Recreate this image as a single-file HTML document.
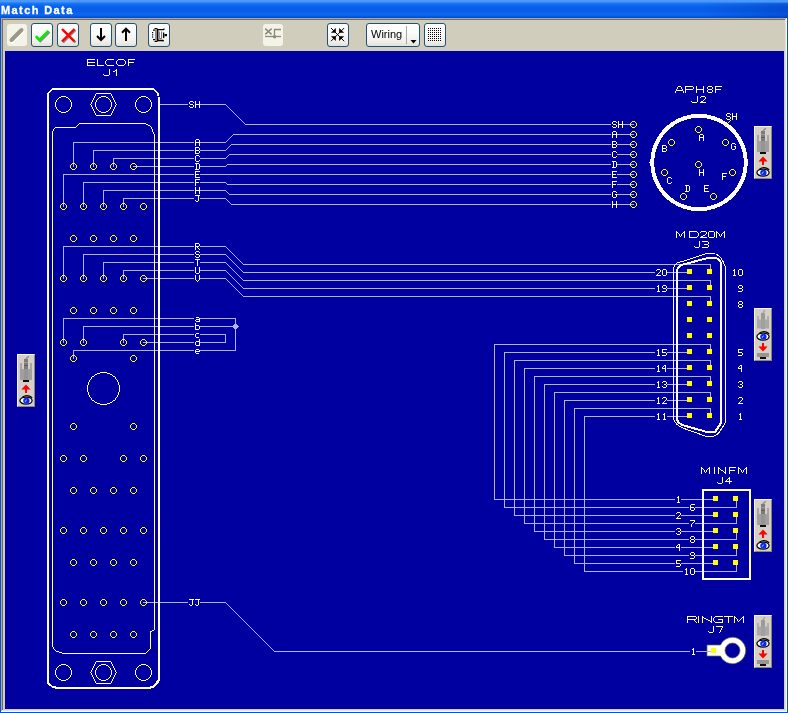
<!DOCTYPE html>
<html><head><meta charset="utf-8"><style>
html,body{margin:0;padding:0;}
body{width:788px;height:713px;position:relative;overflow:hidden;background:#0053e1;font-family:"Liberation Sans",sans-serif;}
.abs{position:absolute;}
#title{position:absolute;left:0;top:0;width:788px;height:18px;
 background:linear-gradient(to bottom,#3d8ef5 0px,#5aa4fd 1px,#3a8cf8 2px,#1470f0 4px,#0860ea 7px,#065de8 11px,#0a64ee 13px,#0c67f1 15px,#0052de 17px,#0049d2 18px);}
#ttext{will-change:transform;position:absolute;left:1px;top:4px;color:#fff;font-weight:bold;font-size:11px;letter-spacing:1.4px;-webkit-text-stroke:0.35px #fff;line-height:12px;}
#client{position:absolute;left:1px;top:18px;width:786px;height:694px;background:#d0cdbc;}
.bt1{position:absolute;left:0;top:0;width:786px;height:1px;background:#aca899;}
.bt2{position:absolute;left:1px;top:1px;width:785px;height:1px;background:#716f64;}
.bl1{position:absolute;left:0;top:0;width:1px;height:694px;background:#aca899;}
.bl2{position:absolute;left:1px;top:1px;width:1px;height:692px;background:#716f64;}
.br1{position:absolute;left:785px;top:0;width:1px;height:694px;background:#fbfaf4;}
.br2{position:absolute;left:784px;top:1px;width:1px;height:692px;background:#e6e3d4;}
.bb1{position:absolute;left:0;top:693px;width:786px;height:1px;background:#fbfaf4;}
.bb2{position:absolute;left:1px;top:692px;width:784px;height:1px;background:#e6e3d4;}
#canvas{position:absolute;left:5px;top:51px;width:779px;height:658px;background:#0000a0;}
.btn{position:absolute;border:1px solid #1c5180;border-radius:3px;
 background:linear-gradient(to bottom,#ffffff 0%,#fbfbf9 40%,#f0efea 80%,#e3e0d6 100%);}
.dbtn{position:absolute;border-radius:3px;background:#f4f3ea;}
.wid{position:absolute;width:16px;height:51px;background:#d4d0c8;border-top:1px solid #f6f5ee;border-left:1px solid #f6f5ee;border-right:1px solid #8a8775;border-bottom:1px solid #8a8775;}
#wiring{will-change:transform;position:absolute;left:371px;top:28px;font-size:11px;color:#000;line-height:13px;}
</style></head><body>
<div id="title"><div style="position:absolute;left:700px;top:3px;width:88px;height:15px;background:linear-gradient(to right,rgba(0,40,170,0),rgba(0,40,170,0.35))"></div><div id="ttext">Match Data</div></div>
<div id="client">
<div class="bt1"></div><div class="bt2"></div><div class="bl1"></div><div class="bl2"></div>
<div class="br1"></div><div class="br2"></div><div class="bb1"></div><div class="bb2"></div>
</div>
<div class="dbtn" style="left:7px;top:24px;width:20px;height:22px"><svg width="20" height="22"><path d="M4.5 16.5 L14.5 6.5" stroke="#fff" stroke-width="4" stroke-linecap="round" transform="translate(0.7,0.9)"/><path d="M4.5 16 L14.5 6" stroke="#9a9a84" stroke-width="4" stroke-linecap="round"/></svg></div>
<div class="btn" style="left:31px;top:23px;width:20px;height:22px"><svg width="20" height="22" style="position:absolute;left:0;top:0"><path d="M3.8 12.2 L7.4 15.8 L16.5 6.8" stroke="#8a8a8a" stroke-width="2.6" fill="none" transform="translate(0.9,1)"/><path d="M3.8 12.2 L7.4 15.8 L16.5 6.8" stroke="#00f000" stroke-width="2.6" fill="none"/></svg></div>
<div class="btn" style="left:57px;top:23px;width:20px;height:22px"><svg width="20" height="22" style="position:absolute;left:0;top:0"><g transform="translate(1,1)" stroke="#8a8a8a" stroke-width="2.4"><path d="M4 5 L16.5 17.5"/><path d="M16.5 5 L4 17.5"/></g><g stroke="#ff0000" stroke-width="2.4"><path d="M4 5 L16.5 17.5"/><path d="M16.5 5 L4 17.5"/></g></svg></div>
<div class="btn" style="left:90px;top:23px;width:20px;height:22px"><svg width="20" height="22" style="position:absolute;left:0;top:0"><path d="M10 4 V15.5" stroke="#000" stroke-width="2"/><path d="M6 12 L10 16 L14 12" stroke="#000" stroke-width="2" fill="none"/></svg></div>
<div class="btn" style="left:115px;top:23px;width:20px;height:22px"><svg width="20" height="22" style="position:absolute;left:0;top:0"><path d="M10 5 V17" stroke="#000" stroke-width="2"/><path d="M6 8.7 L10 4.7 L14 8.7" stroke="#000" stroke-width="2" fill="none"/></svg></div>
<div class="btn" style="left:148px;top:23px;width:20px;height:22px"><svg width="20" height="22" style="position:absolute;left:0;top:0"><g transform="translate(-149,-24)"><rect x="153" y="29.5" width="2" height="1.2" fill="#000"/><rect x="152" y="32" width="1.2" height="1.2" fill="#000"/><rect x="152" y="34.2" width="1.2" height="1.2" fill="#000"/><rect x="152" y="36.4" width="1.2" height="1.2" fill="#000"/><rect x="153" y="39" width="2" height="1.2" fill="#000"/><rect x="155" y="28" width="2" height="14" fill="#8c8c8c"/><rect x="154.5" y="28" width="3" height="1" fill="#000"/><rect x="154.5" y="41" width="3" height="1" fill="#000"/><path d="M157.7 29 V40.5 H163.3 M157.7 29.6 H163.5 L164.5 28.8" stroke="#000" stroke-width="1.4" fill="none"/><path d="M159.3 31.5 V38.6 H161.6 V31.5" stroke="#6a6a6a" stroke-width="1" fill="none"/><rect x="163" y="32.5" width="1.3" height="5.5" fill="#000"/><rect x="164.5" y="34" width="2.5" height="2.2" fill="#000"/><rect x="162.4" y="40" width="1.4" height="1.4" fill="#000"/></g></svg></div>
<div class="dbtn" style="left:263px;top:24px;width:20px;height:22px"><svg width="20" height="22" style="position:absolute;left:0;top:0"><g transform="translate(-263,-24)" stroke="#8c8c74" fill="none"><path d="M265.2 28.6 L271.6 34.4 M271.6 28.6 L265.2 34.4" stroke-width="1.5"/><path d="M265 36.5 H281" stroke-width="1.3"/><path d="M274.5 36.5 V29.5 H281" stroke-width="1.3"/></g><circle cx="11.5" cy="12.8" r="1.7" fill="#8c8c74"/></svg></div>
<div class="btn" style="left:327px;top:23px;width:20px;height:22px"><svg width="20" height="22" style="position:absolute;left:0;top:0"><g fill="#000"><path d="M2.9 8.8 L7.8 8.8 L7.8 4.1 Z"/><path d="M11.1 8.8 L16.2 8.8 L11.1 4.1 Z"/><path d="M2.9 12.3 L7.8 12.3 L7.8 17 Z"/><path d="M11.1 12.3 L16.2 12.3 L11.1 17 Z"/></g><path d="M3 4 L16.2 17.2 M16.2 4 L3 17.2" stroke="#000" stroke-width="1"/></svg></div>
<div class="btn" style="left:366px;top:23px;width:52px;height:22px"><div style="position:absolute;left:39px;top:2px;width:1px;height:18px;background:#aca899"></div><svg width="8" height="4" style="position:absolute;left:43px;top:16px"><path d="M0.5 0 H6.5 L3.5 3.5 Z" fill="#000"/></svg></div>
<div id="wiring">Wiring</div>
<div class="btn" style="left:424px;top:23px;width:20px;height:22px"><svg width="20" height="22" style="position:absolute;left:0;top:0"><rect x="3" y="4" width="1" height="1" fill="#000"/><rect x="3" y="6" width="1" height="1" fill="#000"/><rect x="3" y="8" width="1" height="1" fill="#000"/><rect x="3" y="10" width="1" height="1" fill="#000"/><rect x="3" y="12" width="1" height="1" fill="#000"/><rect x="3" y="14" width="1" height="1" fill="#000"/><rect x="3" y="16" width="1" height="1" fill="#000"/><rect x="5" y="4" width="1" height="1" fill="#000"/><rect x="5" y="6" width="1" height="1" fill="#000"/><rect x="5" y="8" width="1" height="1" fill="#000"/><rect x="5" y="10" width="1" height="1" fill="#000"/><rect x="5" y="12" width="1" height="1" fill="#000"/><rect x="5" y="14" width="1" height="1" fill="#000"/><rect x="5" y="16" width="1" height="1" fill="#000"/><rect x="7" y="4" width="1" height="1" fill="#000"/><rect x="7" y="6" width="1" height="1" fill="#000"/><rect x="7" y="8" width="1" height="1" fill="#000"/><rect x="7" y="10" width="1" height="1" fill="#000"/><rect x="7" y="12" width="1" height="1" fill="#000"/><rect x="7" y="14" width="1" height="1" fill="#000"/><rect x="7" y="16" width="1" height="1" fill="#000"/><rect x="9" y="4" width="1" height="1" fill="#000"/><rect x="9" y="6" width="1" height="1" fill="#000"/><rect x="9" y="8" width="1" height="1" fill="#000"/><rect x="9" y="10" width="1" height="1" fill="#000"/><rect x="9" y="12" width="1" height="1" fill="#000"/><rect x="9" y="14" width="1" height="1" fill="#000"/><rect x="9" y="16" width="1" height="1" fill="#000"/><rect x="11" y="4" width="1" height="1" fill="#000"/><rect x="11" y="6" width="1" height="1" fill="#000"/><rect x="11" y="8" width="1" height="1" fill="#000"/><rect x="11" y="10" width="1" height="1" fill="#000"/><rect x="11" y="12" width="1" height="1" fill="#000"/><rect x="11" y="14" width="1" height="1" fill="#000"/><rect x="11" y="16" width="1" height="1" fill="#000"/><rect x="13" y="4" width="1" height="1" fill="#000"/><rect x="13" y="6" width="1" height="1" fill="#000"/><rect x="13" y="8" width="1" height="1" fill="#000"/><rect x="13" y="10" width="1" height="1" fill="#000"/><rect x="13" y="12" width="1" height="1" fill="#000"/><rect x="13" y="14" width="1" height="1" fill="#000"/><rect x="13" y="16" width="1" height="1" fill="#000"/><rect x="15" y="4" width="1" height="1" fill="#000"/><rect x="15" y="6" width="1" height="1" fill="#000"/><rect x="15" y="8" width="1" height="1" fill="#000"/><rect x="15" y="10" width="1" height="1" fill="#000"/><rect x="15" y="12" width="1" height="1" fill="#000"/><rect x="15" y="14" width="1" height="1" fill="#000"/><rect x="15" y="16" width="1" height="1" fill="#000"/></svg></div>
<div id="canvas"></div>
<svg class="abs" style="left:0;top:0" width="788" height="713" viewBox="0 0 788 713" shape-rendering="crispEdges">
<path fill="#b0b0ff" d="M160 104h28v1h-28zM200 104h26v1h-26zM226 105h1v1h-1zM227 106h1v1h-1zM228 107h1v1h-1zM229 108h1v1h-1zM230 109h1v1h-1zM231 110h1v1h-1zM232 111h1v1h-1zM233 112h1v1h-1zM234 113h1v1h-1zM235 114h1v1h-1zM236 115h1v1h-1zM237 116h1v1h-1zM238 117h1v1h-1zM239 118h1v1h-1zM240 119h1v1h-1zM241 120h1v1h-1zM242 121h1v1h-1zM243 122h1v1h-1zM244 123h1v1h-1zM245 124h366v1h-366zM623 124h7v1h-7zM631 124h3v1h-3zM233 134h378v1h-378zM617 134h13v1h-13zM631 134h3v1h-3zM232 135h1v1h-1zM231 136h1v1h-1zM230 137h1v1h-1zM229 138h1v1h-1zM228 139h1v1h-1zM227 140h1v1h-1zM226 141h1v1h-1zM73 142h81v1h-81zM155 142h3v1h-3zM160 142h34v1h-34zM200 142h26v1h-26zM231 144h380v1h-380zM617 144h13v1h-13zM631 144h3v1h-3zM230 145h1v1h-1zM229 146h1v1h-1zM228 147h1v1h-1zM227 148h1v1h-1zM226 149h1v1h-1zM93 150h61v1h-61zM155 150h3v1h-3zM160 150h34v1h-34zM200 150h26v1h-26zM229 154h382v1h-382zM617 154h13v1h-13zM631 154h3v1h-3zM228 155h1v1h-1zM227 156h1v1h-1zM226 157h1v1h-1zM113 158h41v1h-41zM155 158h3v1h-3zM160 158h34v1h-34zM200 158h26v1h-26zM73 143h1v20h-1zM93 151h1v12h-1zM113 159h1v4h-1zM227 164h384v1h-384zM617 164h13v1h-13zM631 164h3v1h-3zM226 165h1v1h-1zM73 164h1v3h-1zM93 164h1v3h-1zM113 164h1v3h-1zM133 166h3v1h-3zM137 166h17v1h-17zM155 166h3v1h-3zM160 166h34v1h-34zM200 166h26v1h-26zM63 174h91v1h-91zM155 174h3v1h-3zM160 174h34v1h-34zM200 174h411v1h-411zM617 174h13v1h-13zM631 174h3v1h-3zM83 182h71v1h-71zM155 182h3v1h-3zM160 182h34v1h-34zM200 182h26v1h-26zM226 183h1v1h-1zM227 184h384v1h-384zM617 184h13v1h-13zM631 184h3v1h-3zM103 190h51v1h-51zM155 190h3v1h-3zM160 190h34v1h-34zM200 190h26v1h-26zM226 191h1v1h-1zM227 192h1v1h-1zM228 193h1v1h-1zM229 194h382v1h-382zM617 194h13v1h-13zM631 194h3v1h-3zM123 198h31v1h-31zM155 198h3v1h-3zM160 198h34v1h-34zM200 198h26v1h-26zM226 199h1v1h-1zM227 200h1v1h-1zM228 201h1v1h-1zM63 175h1v28h-1zM83 183h1v20h-1zM103 191h1v12h-1zM123 199h1v4h-1zM229 202h1v1h-1zM230 203h1v1h-1zM231 204h380v1h-380zM617 204h13v1h-13zM631 204h3v1h-3zM63 204h1v3h-1zM83 204h1v3h-1zM103 204h1v3h-1zM123 204h1v3h-1zM63 246h91v1h-91zM155 246h3v1h-3zM160 246h34v1h-34zM200 246h26v1h-26zM226 247h1v1h-1zM227 248h1v1h-1zM228 249h1v1h-1zM229 250h1v1h-1zM230 251h1v1h-1zM231 252h1v1h-1zM232 253h1v1h-1zM83 254h71v1h-71zM155 254h3v1h-3zM160 254h34v1h-34zM200 254h26v1h-26zM233 254h1v1h-1zM226 255h1v1h-1zM234 255h1v1h-1zM227 256h1v1h-1zM235 256h1v1h-1zM228 257h1v1h-1zM236 257h1v1h-1zM229 258h1v1h-1zM237 258h1v1h-1zM230 259h1v1h-1zM238 259h1v1h-1zM231 260h1v1h-1zM239 260h1v1h-1zM232 261h1v1h-1zM240 261h1v1h-1zM103 262h51v1h-51zM155 262h3v1h-3zM160 262h34v1h-34zM200 262h26v1h-26zM233 262h1v1h-1zM241 262h1v1h-1zM226 263h1v1h-1zM234 263h1v1h-1zM242 263h1v1h-1zM227 264h1v1h-1zM235 264h1v1h-1zM243 264h468v1h-468zM228 265h1v1h-1zM236 265h1v1h-1zM229 266h1v1h-1zM237 266h1v1h-1zM230 267h1v1h-1zM238 267h1v1h-1zM231 268h1v1h-1zM239 268h1v1h-1zM710 265h1v4h-1zM232 269h1v1h-1zM240 269h1v1h-1zM123 270h31v1h-31zM155 270h3v1h-3zM160 270h34v1h-34zM200 270h26v1h-26zM233 270h1v1h-1zM241 270h1v1h-1zM226 271h1v1h-1zM234 271h1v1h-1zM242 271h1v1h-1zM227 272h1v1h-1zM235 272h1v1h-1zM243 272h412v1h-412zM667 272h20v1h-20zM228 273h1v1h-1zM236 273h1v1h-1zM63 247h1v28h-1zM83 255h1v20h-1zM103 263h1v12h-1zM123 271h1v4h-1zM229 274h1v1h-1zM237 274h1v1h-1zM230 275h1v1h-1zM238 275h1v1h-1zM231 276h1v1h-1zM239 276h1v1h-1zM232 277h1v1h-1zM240 277h1v1h-1zM63 276h1v3h-1zM83 276h1v3h-1zM103 276h1v3h-1zM123 276h1v3h-1zM143 278h3v1h-3zM147 278h7v1h-7zM155 278h3v1h-3zM160 278h34v1h-34zM200 278h26v1h-26zM233 278h1v1h-1zM241 278h1v1h-1zM226 279h1v1h-1zM234 279h1v1h-1zM242 279h1v1h-1zM227 280h1v1h-1zM235 280h1v1h-1zM243 280h468v1h-468zM228 281h1v1h-1zM236 281h1v1h-1zM229 282h1v1h-1zM237 282h1v1h-1zM230 283h1v1h-1zM238 283h1v1h-1zM231 284h1v1h-1zM239 284h1v1h-1zM710 281h1v4h-1zM232 285h1v1h-1zM240 285h1v1h-1zM233 286h1v1h-1zM241 286h1v1h-1zM234 287h1v1h-1zM242 287h1v1h-1zM235 288h1v1h-1zM243 288h412v1h-412zM667 288h20v1h-20zM236 289h1v1h-1zM237 290h1v1h-1zM238 291h1v1h-1zM239 292h1v1h-1zM240 293h1v1h-1zM241 294h1v1h-1zM242 295h1v1h-1zM243 296h468v1h-468zM710 297h1v4h-1zM63 318h91v1h-91zM155 318h3v1h-3zM160 318h34v1h-34zM200 318h36v1h-36zM235 319h1v5h-1zM234 324h3v1h-3zM233 325h5v1h-5zM83 326h71v1h-71zM155 326h3v1h-3zM160 326h34v1h-34zM200 326h39v1h-39zM233 327h5v1h-5zM234 328h3v1h-3zM123 334h31v1h-31zM155 334h3v1h-3zM160 334h34v1h-34zM200 334h26v1h-26zM63 319h1v20h-1zM83 327h1v12h-1zM123 335h1v4h-1zM225 335h1v7h-1zM63 340h1v3h-1zM83 340h1v3h-1zM123 340h1v3h-1zM143 342h3v1h-3zM147 342h7v1h-7zM155 342h3v1h-3zM160 342h34v1h-34zM200 342h26v1h-26zM494 344h217v1h-217zM710 345h1v4h-1zM235 329h1v21h-1zM73 350h81v1h-81zM155 350h3v1h-3zM160 350h34v1h-34zM200 350h36v1h-36zM504 352h151v1h-151zM667 352h20v1h-20zM73 351h1v4h-1zM73 356h1v3h-1zM514 360h197v1h-197zM710 361h1v4h-1zM524 368h131v1h-131zM667 368h20v1h-20zM534 376h177v1h-177zM710 377h1v4h-1zM544 384h111v1h-111zM667 384h20v1h-20zM554 392h157v1h-157zM710 393h1v4h-1zM564 400h91v1h-91zM667 400h20v1h-20zM574 408h137v1h-137zM710 409h1v4h-1zM584 416h71v1h-71zM667 416h20v1h-20zM494 345h1v154h-1zM504 353h1v146h-1zM514 361h1v138h-1zM524 369h1v130h-1zM534 377h1v122h-1zM544 385h1v114h-1zM554 393h1v106h-1zM564 401h1v98h-1zM574 409h1v90h-1zM584 417h1v82h-1zM494 499h181v1h-181zM681 499h21v1h-21zM704 499h9v1h-9zM504 500h1v7h-1zM514 500h1v7h-1zM524 500h1v7h-1zM534 500h1v7h-1zM544 500h1v7h-1zM554 500h1v7h-1zM564 500h1v7h-1zM574 500h1v7h-1zM584 500h1v7h-1zM736 501h1v6h-1zM504 507h185v1h-185zM695 507h7v1h-7zM704 507h33v1h-33zM514 508h1v7h-1zM524 508h1v7h-1zM534 508h1v7h-1zM544 508h1v7h-1zM554 508h1v7h-1zM564 508h1v7h-1zM574 508h1v7h-1zM584 508h1v7h-1zM514 515h161v1h-161zM681 515h21v1h-21zM704 515h9v1h-9zM524 516h1v7h-1zM534 516h1v7h-1zM544 516h1v7h-1zM554 516h1v7h-1zM564 516h1v7h-1zM574 516h1v7h-1zM584 516h1v7h-1zM736 517h1v6h-1zM524 523h165v1h-165zM695 523h7v1h-7zM704 523h33v1h-33zM534 524h1v7h-1zM544 524h1v7h-1zM554 524h1v7h-1zM564 524h1v7h-1zM574 524h1v7h-1zM584 524h1v7h-1zM534 531h141v1h-141zM681 531h21v1h-21zM704 531h9v1h-9zM544 532h1v7h-1zM554 532h1v7h-1zM564 532h1v7h-1zM574 532h1v7h-1zM584 532h1v7h-1zM736 533h1v6h-1zM544 539h145v1h-145zM695 539h7v1h-7zM704 539h33v1h-33zM554 540h1v7h-1zM564 540h1v7h-1zM574 540h1v7h-1zM584 540h1v7h-1zM554 547h121v1h-121zM681 547h21v1h-21zM704 547h9v1h-9zM564 548h1v7h-1zM574 548h1v7h-1zM584 548h1v7h-1zM736 549h1v6h-1zM564 555h125v1h-125zM695 555h7v1h-7zM704 555h33v1h-33zM574 556h1v7h-1zM584 556h1v7h-1zM574 563h101v1h-101zM681 563h21v1h-21zM704 563h9v1h-9zM584 564h1v7h-1zM736 565h1v6h-1zM584 571h99v1h-99zM695 571h7v1h-7zM704 571h33v1h-33zM143 602h3v1h-3zM147 602h7v1h-7zM155 602h3v1h-3zM160 602h28v1h-28zM200 602h26v1h-26zM226 603h1v1h-1zM227 604h1v1h-1zM228 605h1v1h-1zM229 606h1v1h-1zM230 607h1v1h-1zM231 608h1v1h-1zM232 609h1v1h-1zM233 610h1v1h-1zM234 611h1v1h-1zM235 612h1v1h-1zM236 613h1v1h-1zM237 614h1v1h-1zM238 615h1v1h-1zM239 616h1v1h-1zM240 617h1v1h-1zM241 618h1v1h-1zM242 619h1v1h-1zM243 620h1v1h-1zM244 621h1v1h-1zM245 622h1v1h-1zM246 623h1v1h-1zM247 624h1v1h-1zM248 625h1v1h-1zM249 626h1v1h-1zM250 627h1v1h-1zM251 628h1v1h-1zM252 629h1v1h-1zM253 630h1v1h-1zM254 631h1v1h-1zM255 632h1v1h-1zM256 633h1v1h-1zM257 634h1v1h-1zM258 635h1v1h-1zM259 636h1v1h-1zM260 637h1v1h-1zM261 638h1v1h-1zM262 639h1v1h-1zM263 640h1v1h-1zM264 641h1v1h-1zM265 642h1v1h-1zM266 643h1v1h-1zM267 644h1v1h-1zM268 645h1v1h-1zM269 646h1v1h-1zM270 647h1v1h-1zM271 648h1v1h-1zM272 649h1v1h-1zM273 650h1v1h-1zM274 651h416v1h-416zM696 651h15v1h-15z"/><path fill="#ffffff" d="M87 59h8v1h-8zM107 59h7v1h-7zM118 59h6v1h-6zM128 59h7v1h-7zM106 60h1v1h-1zM117 60h1v1h-1zM124 60h1v1h-1zM87 60h1v2h-1zM128 60h1v2h-1zM87 62h8v1h-8zM128 62h6v1h-6zM105 61h1v3h-1zM116 61h1v3h-1zM125 61h1v3h-1zM87 63h1v2h-1zM97 59h1v6h-1zM106 64h1v1h-1zM117 64h1v1h-1zM124 64h1v1h-1zM87 65h8v1h-8zM97 65h7v1h-7zM107 65h7v1h-7zM118 65h6v1h-6zM128 63h1v3h-1zM116 69h1v1h-1zM115 70h2v1h-2zM113 71h2v1h-2zM103 74h1v1h-1zM109 69h1v6h-1zM104 75h5v1h-5zM116 71h1v5h-1zM678 86h3v1h-3zM685 86h8v1h-8zM708 86h4v1h-4zM715 86h7v1h-7zM52 88h102v1h-102zM677 87h1v2h-1zM681 87h1v2h-1zM685 87h1v2h-1zM693 87h1v2h-1zM696 86h1v3h-1zM703 86h1v3h-1zM707 87h1v2h-1zM712 87h1v2h-1zM715 87h1v2h-1zM51 89h104v1h-104zM676 89h1v1h-1zM682 89h1v1h-1zM685 89h8v1h-8zM696 89h8v1h-8zM708 89h4v1h-4zM715 89h6v1h-6zM50 90h2v1h-2zM154 90h2v1h-2zM676 90h7v1h-7zM49 91h2v1h-2zM155 91h2v1h-2zM707 90h1v2h-1zM712 90h1v2h-1zM48 92h2v1h-2zM156 92h2v1h-2zM675 91h1v2h-1zM683 91h1v2h-1zM685 90h1v3h-1zM696 90h1v3h-1zM703 90h1v3h-1zM708 92h4v1h-4zM715 90h1v3h-1zM96 93h15v1h-15zM95 94h1v2h-1zM111 94h1v2h-1zM157 93h2v3h-2zM61 96h5v1h-5zM101 96h5v1h-5zM141 96h5v1h-5zM701 96h4v1h-4zM59 97h2v1h-2zM66 97h2v1h-2zM94 96h1v2h-1zM99 97h2v1h-2zM106 97h2v1h-2zM112 96h1v2h-1zM139 97h2v1h-2zM146 97h2v1h-2zM700 97h1v1h-1zM58 98h1v1h-1zM68 98h1v1h-1zM98 98h1v1h-1zM108 98h1v1h-1zM138 98h1v1h-1zM148 98h1v1h-1zM705 97h1v2h-1zM57 99h1v1h-1zM69 99h1v1h-1zM93 98h1v2h-1zM97 99h1v1h-1zM109 99h1v1h-1zM113 98h1v2h-1zM137 99h1v1h-1zM149 99h1v1h-1zM704 99h1v1h-1zM703 100h1v1h-1zM56 100h1v2h-1zM70 100h1v2h-1zM92 100h1v2h-1zM96 100h1v2h-1zM110 100h1v2h-1zM114 100h1v2h-1zM136 100h1v2h-1zM150 100h1v2h-1zM190 101h3v1h-3zM691 101h1v1h-1zM697 96h1v6h-1zM701 101h2v1h-2zM193 102h1v1h-1zM692 102h5v1h-5zM700 102h6v1h-6zM91 102h1v2h-1zM115 102h1v2h-1zM189 102h1v2h-1zM195 101h1v3h-1zM199 101h1v3h-1zM90 104h1v1h-1zM116 104h1v1h-1zM190 104h3v1h-3zM195 104h5v1h-5zM55 102h1v5h-1zM71 102h1v5h-1zM91 105h1v2h-1zM95 102h1v5h-1zM111 102h1v5h-1zM115 105h1v2h-1zM135 102h1v5h-1zM151 102h1v5h-1zM189 106h1v1h-1zM193 105h1v2h-1zM190 107h3v1h-3zM195 105h1v3h-1zM199 105h1v3h-1zM56 107h1v2h-1zM70 107h1v2h-1zM92 107h1v2h-1zM96 107h1v2h-1zM110 107h1v2h-1zM114 107h1v2h-1zM136 107h1v2h-1zM150 107h1v2h-1zM57 109h1v1h-1zM69 109h1v1h-1zM97 109h1v1h-1zM109 109h1v1h-1zM137 109h1v1h-1zM149 109h1v1h-1zM58 110h1v1h-1zM68 110h1v1h-1zM93 109h1v2h-1zM98 110h1v1h-1zM108 110h1v1h-1zM113 109h1v2h-1zM138 110h1v1h-1zM148 110h1v1h-1zM59 111h2v1h-2zM66 111h2v1h-2zM99 111h2v1h-2zM106 111h2v1h-2zM139 111h2v1h-2zM146 111h2v1h-2zM61 112h5v1h-5zM94 111h1v2h-1zM101 112h5v1h-5zM112 111h1v2h-1zM141 112h5v1h-5zM727 113h3v1h-3zM95 113h1v2h-1zM111 113h1v2h-1zM691 114h16v1h-16zM730 114h1v1h-1zM96 115h15v1h-15zM687 115h24v1h-24zM726 114h1v2h-1zM732 113h1v3h-1zM736 113h1v3h-1zM683 116h32v1h-32zM727 116h3v1h-3zM732 116h5v1h-5zM681 117h36v1h-36zM678 118h13v1h-13zM707 118h13v1h-13zM726 118h1v1h-1zM730 117h1v2h-1zM676 119h11v1h-11zM711 119h11v1h-11zM727 119h3v1h-3zM732 117h1v3h-1zM736 117h1v3h-1zM675 120h9v1h-9zM714 120h9v1h-9zM613 121h3v1h-3zM673 121h8v1h-8zM717 121h8v1h-8zM616 122h1v1h-1zM671 122h8v1h-8zM719 122h8v1h-8zM79 123h67v1h-67zM612 122h1v2h-1zM618 121h1v3h-1zM622 121h1v3h-1zM670 123h7v1h-7zM721 123h6v1h-6zM78 124h1v1h-1zM146 124h2v1h-2zM613 124h3v1h-3zM618 124h5v1h-5zM669 124h6v1h-6zM723 124h3v1h-3zM727 124h2v1h-2zM77 125h1v1h-1zM148 125h2v1h-2zM667 125h7v1h-7zM724 125h1v1h-1zM726 125h5v1h-5zM76 126h1v1h-1zM150 126h1v1h-1zM612 126h1v1h-1zM616 125h1v2h-1zM666 126h7v1h-7zM725 126h7v1h-7zM55 127h21v1h-21zM613 127h3v1h-3zM618 125h1v3h-1zM622 125h1v3h-1zM665 127h6v1h-6zM727 127h6v1h-6zM54 128h1v1h-1zM151 127h1v2h-1zM664 128h6v1h-6zM728 128h6v1h-6zM663 129h6v1h-6zM729 129h6v1h-6zM53 129h1v2h-1zM662 130h6v1h-6zM730 130h6v1h-6zM152 129h1v3h-1zM613 131h3v1h-3zM662 131h5v1h-5zM731 131h5v1h-5zM661 132h5v1h-5zM732 132h5v1h-5zM153 132h1v2h-1zM612 132h1v2h-1zM616 132h1v2h-1zM660 133h5v1h-5zM733 133h5v1h-5zM612 134h5v1h-5zM659 134h5v1h-5zM700 134h3v1h-3zM734 134h5v1h-5zM659 135h4v1h-4zM735 135h4v1h-4zM658 136h5v1h-5zM699 135h1v2h-1zM703 135h1v2h-1zM735 136h5v1h-5zM612 135h1v3h-1zM616 135h1v3h-1zM657 137h5v1h-5zM699 137h5v1h-5zM736 137h5v1h-5zM657 138h4v1h-4zM737 138h4v1h-4zM196 139h3v1h-3zM656 139h5v1h-5zM737 139h5v1h-5zM656 140h4v1h-4zM699 138h1v3h-1zM703 138h1v3h-1zM738 140h4v1h-4zM195 140h1v2h-1zM199 140h1v2h-1zM612 141h4v1h-4zM655 141h5v1h-5zM738 141h5v1h-5zM195 142h5v1h-5zM655 142h4v1h-4zM739 142h4v1h-4zM612 142h1v2h-1zM616 142h1v2h-1zM654 143h5v1h-5zM732 143h3v1h-3zM739 143h5v1h-5zM612 144h4v1h-4zM654 144h4v1h-4zM735 144h1v1h-1zM740 144h4v1h-4zM195 143h1v3h-1zM199 143h1v3h-1zM653 145h5v1h-5zM662 145h4v1h-4zM740 145h5v1h-5zM612 145h1v2h-1zM616 145h1v2h-1zM734 146h2v1h-2zM195 147h4v1h-4zM612 147h4v1h-4zM653 146h4v2h-4zM662 146h1v2h-1zM666 146h1v2h-1zM741 146h4v2h-4zM652 148h5v1h-5zM662 148h4v1h-4zM731 144h1v5h-1zM735 147h1v2h-1zM741 148h5v1h-5zM195 148h1v2h-1zM199 148h1v2h-1zM732 149h3v1h-3zM195 150h4v1h-4zM662 149h1v2h-1zM666 149h1v2h-1zM613 151h3v1h-3zM652 149h4v3h-4zM662 151h4v1h-4zM742 149h4v3h-4zM195 151h1v2h-1zM199 151h1v2h-1zM616 152h1v1h-1zM195 153h4v1h-4zM196 155h3v1h-3zM199 156h1v1h-1zM612 152h1v5h-1zM616 156h1v1h-1zM613 157h3v1h-3zM651 152h4v6h-4zM743 152h4v6h-4zM651 158h3v1h-3zM744 158h3v1h-3zM195 156h1v5h-1zM199 160h1v1h-1zM196 161h3v1h-3zM612 161h4v1h-4zM650 159h4v3h-4zM649 162h5v1h-5zM195 163h4v1h-4zM650 163h4v3h-4zM744 159h4v7h-4zM613 162h1v5h-1zM616 162h1v5h-1zM651 166h3v1h-3zM744 166h3v1h-3zM612 167h4v1h-4zM196 164h1v5h-1zM199 164h1v5h-1zM195 169h4v1h-4zM195 171h5v1h-5zM612 171h5v1h-5zM699 169h1v3h-1zM703 169h1v3h-1zM651 167h4v6h-4zM699 172h5v1h-5zM743 167h4v6h-4zM195 172h1v2h-1zM612 172h1v2h-1zM722 173h5v1h-5zM195 174h4v1h-4zM612 174h4v1h-4zM652 173h4v3h-4zM699 173h1v3h-1zM703 173h1v3h-1zM722 174h1v2h-1zM742 173h4v3h-4zM195 175h1v2h-1zM612 175h1v2h-1zM652 176h5v1h-5zM722 176h4v1h-4zM741 176h5v1h-5zM195 177h5v1h-5zM612 177h5v1h-5zM668 177h3v1h-3zM653 177h4v2h-4zM671 178h1v1h-1zM741 177h4v2h-4zM195 179h5v1h-5zM653 179h5v1h-5zM722 177h1v3h-1zM740 179h5v1h-5zM654 180h4v1h-4zM740 180h4v1h-4zM195 180h1v2h-1zM612 181h5v1h-5zM654 181h5v1h-5zM739 181h5v1h-5zM195 182h4v1h-4zM655 182h4v1h-4zM667 178h1v5h-1zM671 182h1v1h-1zM739 182h4v1h-4zM612 182h1v2h-1zM655 183h5v1h-5zM668 183h3v1h-3zM738 183h5v1h-5zM612 184h4v1h-4zM656 184h4v1h-4zM738 184h4v1h-4zM195 183h1v3h-1zM656 185h5v1h-5zM685 185h4v1h-4zM704 185h5v1h-5zM737 185h5v1h-5zM657 186h4v1h-4zM737 186h4v1h-4zM612 185h1v3h-1zM657 187h5v1h-5zM704 186h1v2h-1zM736 187h5v1h-5zM658 188h5v1h-5zM704 188h4v1h-4zM735 188h5v1h-5zM195 187h1v3h-1zM199 187h1v3h-1zM659 189h4v1h-4zM735 189h4v1h-4zM195 190h5v1h-5zM659 190h5v1h-5zM686 186h1v5h-1zM689 186h1v5h-1zM704 189h1v2h-1zM734 190h5v1h-5zM613 191h3v1h-3zM660 191h5v1h-5zM685 191h4v1h-4zM704 191h5v1h-5zM733 191h5v1h-5zM616 192h1v1h-1zM661 192h5v1h-5zM732 192h5v1h-5zM195 191h1v3h-1zM199 191h1v3h-1zM662 193h5v1h-5zM731 193h5v1h-5zM615 194h2v1h-2zM662 194h6v1h-6zM730 194h6v1h-6zM195 195h5v1h-5zM663 195h6v1h-6zM729 195h6v1h-6zM612 192h1v5h-1zM616 195h1v2h-1zM664 196h6v1h-6zM728 196h6v1h-6zM613 197h3v1h-3zM665 197h6v1h-6zM727 197h6v1h-6zM666 198h7v1h-7zM725 198h7v1h-7zM667 199h7v1h-7zM724 199h7v1h-7zM195 200h1v1h-1zM198 196h1v5h-1zM669 200h6v1h-6zM723 200h6v1h-6zM196 201h2v1h-2zM670 201h7v1h-7zM721 201h7v1h-7zM671 202h8v1h-8zM719 202h8v1h-8zM612 201h1v3h-1zM616 201h1v3h-1zM673 203h8v1h-8zM717 203h8v1h-8zM612 204h5v1h-5zM675 204h9v1h-9zM714 204h9v1h-9zM676 205h11v1h-11zM711 205h11v1h-11zM678 206h13v1h-13zM707 206h13v1h-13zM612 205h1v3h-1zM616 205h1v3h-1zM681 207h36v1h-36zM683 208h32v1h-32zM687 209h24v1h-24zM691 210h16v1h-16zM676 231h1v1h-1zM684 231h1v1h-1zM689 231h8v1h-8zM701 231h5v1h-5zM709 231h5v1h-5zM716 231h1v1h-1zM724 231h1v1h-1zM676 232h2v1h-2zM683 232h2v1h-2zM697 232h1v1h-1zM700 232h1v1h-1zM716 232h2v1h-2zM723 232h2v1h-2zM678 233h1v1h-1zM682 233h1v1h-1zM706 232h1v2h-1zM718 233h1v1h-1zM722 233h1v1h-1zM705 234h1v1h-1zM679 234h1v2h-1zM681 234h1v2h-1zM698 233h1v3h-1zM703 235h2v1h-2zM719 234h1v2h-1zM721 234h1v2h-1zM680 236h1v1h-1zM689 232h1v5h-1zM697 236h1v1h-1zM701 236h2v1h-2zM708 232h1v5h-1zM714 232h1v5h-1zM720 236h1v1h-1zM676 233h1v5h-1zM684 233h1v5h-1zM689 237h8v1h-8zM700 237h7v1h-7zM709 237h5v1h-5zM716 233h1v5h-1zM724 233h1v5h-1zM702 241h6v1h-6zM195 243h4v1h-4zM708 242h1v2h-1zM704 244h4v1h-4zM195 244h1v2h-1zM199 244h1v2h-1zM195 246h4v1h-4zM694 246h1v1h-1zM699 241h1v6h-1zM708 245h1v2h-1zM197 247h1v1h-1zM695 247h4v1h-4zM702 247h6v1h-6zM198 248h1v1h-1zM195 247h1v3h-1zM199 249h1v1h-1zM196 251h3v1h-3zM199 252h1v1h-1zM195 252h1v2h-1zM196 254h3v1h-3zM195 256h1v1h-1zM199 255h1v2h-1zM196 257h3v1h-3zM195 259h5v1h-5zM197 260h1v6h-1zM657 269h3v1h-3zM663 269h3v1h-3zM734 269h1v1h-1zM739 269h3v1h-3zM656 270h1v1h-1zM733 270h2v1h-2zM660 270h1v2h-1zM195 267h1v6h-1zM199 267h1v6h-1zM659 272h1v1h-1zM196 273h3v1h-3zM658 273h1v1h-1zM657 274h1v1h-1zM662 270h1v5h-1zM666 270h1v5h-1zM734 271h1v4h-1zM738 270h1v5h-1zM742 270h1v5h-1zM656 275h5v1h-5zM663 275h3v1h-3zM733 275h3v1h-3zM739 275h3v1h-3zM195 275h1v5h-1zM199 275h1v5h-1zM196 280h1v1h-1zM198 280h1v1h-1zM197 281h1v1h-1zM658 285h1v1h-1zM663 285h3v1h-3zM739 285h3v1h-3zM657 286h2v1h-2zM662 286h1v2h-1zM666 286h1v2h-1zM738 286h1v2h-1zM742 286h1v2h-1zM663 288h3v1h-3zM739 288h3v1h-3zM658 287h1v4h-1zM666 289h1v2h-1zM742 289h1v2h-1zM657 291h3v1h-3zM662 291h4v1h-4zM738 291h4v1h-4zM739 301h3v1h-3zM738 302h1v2h-1zM742 302h1v2h-1zM739 304h3v1h-3zM738 305h1v2h-1zM742 305h1v2h-1zM739 307h3v1h-3zM196 317h3v1h-3zM199 318h1v1h-1zM196 319h4v1h-4zM195 320h1v1h-1zM199 320h1v1h-1zM196 321h4v1h-4zM195 323h1v2h-1zM195 325h4v1h-4zM195 326h1v3h-1zM199 326h1v3h-1zM195 329h4v1h-4zM196 333h3v1h-3zM195 334h1v3h-1zM196 337h3v1h-3zM199 339h1v2h-1zM196 341h4v1h-4zM195 342h1v3h-1zM199 342h1v3h-1zM196 345h4v1h-4zM196 349h3v1h-3zM658 349h1v1h-1zM662 349h5v1h-5zM738 349h5v1h-5zM195 350h1v1h-1zM199 350h1v1h-1zM657 350h2v1h-2zM195 351h5v1h-5zM662 350h1v2h-1zM738 350h1v2h-1zM195 352h1v1h-1zM662 352h4v1h-4zM738 352h4v1h-4zM196 353h3v1h-3zM658 351h1v4h-1zM666 353h1v2h-1zM742 353h1v2h-1zM657 355h3v1h-3zM662 355h4v1h-4zM738 355h4v1h-4zM658 365h1v1h-1zM664 365h2v1h-2zM740 365h2v1h-2zM657 366h2v1h-2zM663 366h1v1h-1zM739 366h1v1h-1zM662 367h1v1h-1zM665 366h1v2h-1zM738 367h1v1h-1zM741 366h1v2h-1zM662 368h4v1h-4zM738 368h4v1h-4zM658 367h1v4h-1zM657 371h3v1h-3zM665 369h1v3h-1zM741 369h1v3h-1zM100 372h7v1h-7zM97 373h3v1h-3zM107 373h3v1h-3zM95 374h2v1h-2zM110 374h2v1h-2zM94 375h1v1h-1zM112 375h1v1h-1zM92 376h2v1h-2zM113 376h2v1h-2zM91 377h1v2h-1zM115 377h1v2h-1zM90 379h1v1h-1zM116 379h1v1h-1zM89 380h1v2h-1zM117 380h1v2h-1zM658 381h1v1h-1zM663 381h3v1h-3zM739 381h3v1h-3zM657 382h2v1h-2zM662 382h1v1h-1zM738 382h1v1h-1zM666 382h1v2h-1zM742 382h1v2h-1zM88 382h1v3h-1zM118 382h1v3h-1zM664 384h2v1h-2zM740 384h2v1h-2zM658 383h1v4h-1zM662 386h1v1h-1zM666 385h1v2h-1zM738 386h1v1h-1zM742 385h1v2h-1zM657 387h3v1h-3zM663 387h3v1h-3zM739 387h3v1h-3zM87 385h1v7h-1zM119 385h1v7h-1zM88 392h1v3h-1zM118 392h1v3h-1zM89 395h1v2h-1zM117 395h1v2h-1zM90 397h1v1h-1zM116 397h1v1h-1zM658 397h1v1h-1zM663 397h3v1h-3zM739 397h3v1h-3zM657 398h2v1h-2zM662 398h1v1h-1zM738 398h1v1h-1zM91 398h1v2h-1zM115 398h1v2h-1zM666 398h1v2h-1zM742 398h1v2h-1zM92 400h2v1h-2zM113 400h2v1h-2zM665 400h1v1h-1zM741 400h1v1h-1zM94 401h1v1h-1zM112 401h1v1h-1zM664 401h1v1h-1zM740 401h1v1h-1zM95 402h2v1h-2zM110 402h2v1h-2zM658 399h1v4h-1zM663 402h1v1h-1zM739 402h1v1h-1zM97 403h3v1h-3zM107 403h3v1h-3zM657 403h3v1h-3zM662 403h5v1h-5zM738 403h5v1h-5zM100 404h7v1h-7zM658 413h1v1h-1zM664 413h1v1h-1zM740 413h1v1h-1zM657 414h2v1h-2zM663 414h2v1h-2zM739 414h2v1h-2zM658 415h1v4h-1zM664 415h1v4h-1zM740 415h1v4h-1zM657 419h3v1h-3zM663 419h3v1h-3zM739 419h3v1h-3zM701 467h1v1h-1zM709 467h1v1h-1zM718 467h1v1h-1zM729 467h7v1h-7zM738 467h1v1h-1zM746 467h1v1h-1zM701 468h2v1h-2zM708 468h2v1h-2zM718 468h2v1h-2zM738 468h2v1h-2zM745 468h2v1h-2zM703 469h1v1h-1zM707 469h1v1h-1zM720 469h1v1h-1zM729 468h1v2h-1zM740 469h1v1h-1zM744 469h1v1h-1zM721 470h2v1h-2zM729 470h6v1h-6zM704 470h1v2h-1zM706 470h1v2h-1zM723 471h1v1h-1zM725 467h1v5h-1zM741 470h1v2h-1zM743 470h1v2h-1zM705 472h1v1h-1zM724 472h2v1h-2zM742 472h1v1h-1zM701 469h1v5h-1zM709 469h1v5h-1zM714 467h1v7h-1zM718 469h1v5h-1zM725 473h1v1h-1zM729 471h1v3h-1zM738 469h1v5h-1zM746 469h1v5h-1zM729 477h1v1h-1zM728 478h2v1h-2zM727 479h1v1h-1zM726 480h1v1h-1zM729 479h1v2h-1zM725 481h7v1h-7zM717 482h1v1h-1zM722 477h1v6h-1zM718 483h4v1h-4zM729 482h1v2h-1zM702 489h49v2h-49zM678 496h1v1h-1zM677 497h2v1h-2zM678 498h1v4h-1zM677 502h3v1h-3zM691 504h4v1h-4zM690 505h1v2h-1zM690 507h4v1h-4zM690 508h1v2h-1zM694 508h1v2h-1zM691 510h3v1h-3zM677 512h3v1h-3zM676 513h1v1h-1zM680 513h1v2h-1zM679 515h1v1h-1zM678 516h1v1h-1zM677 517h1v1h-1zM676 518h5v1h-5zM690 520h5v1h-5zM694 521h1v1h-1zM693 522h1v1h-1zM692 523h1v1h-1zM691 524h1v3h-1zM677 528h3v1h-3zM676 529h1v1h-1zM680 529h1v2h-1zM678 531h2v1h-2zM676 533h1v1h-1zM680 532h1v2h-1zM677 534h3v1h-3zM691 536h3v1h-3zM690 537h1v2h-1zM694 537h1v2h-1zM691 539h3v1h-3zM690 540h1v2h-1zM694 540h1v2h-1zM691 542h3v1h-3zM678 544h2v1h-2zM677 545h1v1h-1zM676 546h1v1h-1zM679 545h1v2h-1zM676 547h4v1h-4zM679 548h1v3h-1zM691 552h3v1h-3zM690 553h1v2h-1zM694 553h1v2h-1zM691 555h3v1h-3zM694 556h1v2h-1zM690 558h4v1h-4zM676 560h5v1h-5zM676 561h1v2h-1zM676 563h4v1h-4zM680 564h1v2h-1zM676 566h4v1h-4zM686 568h1v1h-1zM691 568h3v1h-3zM685 569h2v1h-2zM686 570h1v4h-1zM690 569h1v5h-1zM694 569h1v5h-1zM685 574h3v1h-3zM691 574h3v1h-3zM702 491h2v87h-2zM749 491h2v87h-2zM702 578h49v2h-49zM189 599h5v1h-5zM195 599h5v1h-5zM189 604h1v1h-1zM192 600h1v5h-1zM195 604h1v1h-1zM198 600h1v5h-1zM190 605h2v1h-2zM196 605h2v1h-2zM687 616h9v1h-9zM702 616h1v1h-1zM715 616h8v1h-8zM724 616h9v1h-9zM734 616h1v1h-1zM743 616h1v1h-1zM702 617h2v1h-2zM714 617h1v1h-1zM734 617h2v1h-2zM742 617h2v1h-2zM687 617h1v2h-1zM696 617h1v2h-1zM704 618h2v1h-2zM736 618h1v1h-1zM741 618h1v1h-1zM687 619h9v1h-9zM706 619h2v1h-2zM718 619h5v1h-5zM740 619h1v1h-1zM694 620h1v1h-1zM708 620h2v1h-2zM711 616h1v5h-1zM713 618h1v3h-1zM737 619h1v2h-1zM739 620h1v1h-1zM695 621h1v1h-1zM710 621h2v1h-2zM714 621h1v1h-1zM722 620h1v2h-1zM738 621h1v1h-1zM687 620h1v3h-1zM696 622h1v1h-1zM698 616h1v7h-1zM702 618h1v5h-1zM711 622h1v1h-1zM715 622h8v1h-8zM728 617h1v6h-1zM734 618h1v5h-1zM743 618h1v5h-1zM716 626h7v1h-7zM722 627h1v1h-1zM154 134h1v496h-1zM721 628h1v2h-1zM152 630h2v1h-2zM150 631h2v1h-2zM708 631h1v1h-1zM713 626h1v6h-1zM720 630h1v2h-1zM709 632h4v1h-4zM719 632h1v1h-1zM52 131h1v516h-1zM53 647h1v2h-1zM150 632h1v17h-1zM693 648h1v1h-1zM54 649h1v1h-1zM149 649h1v1h-1zM692 649h2v1h-2zM55 650h1v1h-1zM148 650h1v1h-1zM56 651h3v1h-3zM147 651h1v1h-1zM59 652h3v1h-3zM146 652h1v1h-1zM62 653h84v1h-84zM693 650h1v4h-1zM692 654h3v1h-3zM96 661h15v1h-15zM95 662h1v2h-1zM111 662h1v2h-1zM61 664h5v1h-5zM101 664h5v1h-5zM141 664h5v1h-5zM59 665h2v1h-2zM66 665h2v1h-2zM94 664h1v2h-1zM99 665h2v1h-2zM106 665h2v1h-2zM112 664h1v2h-1zM139 665h2v1h-2zM146 665h2v1h-2zM58 666h1v1h-1zM68 666h1v1h-1zM98 666h1v1h-1zM108 666h1v1h-1zM138 666h1v1h-1zM148 666h1v1h-1zM57 667h1v1h-1zM69 667h1v1h-1zM93 666h1v2h-1zM97 667h1v1h-1zM109 667h1v1h-1zM113 666h1v2h-1zM137 667h1v1h-1zM149 667h1v1h-1zM56 668h1v2h-1zM70 668h1v2h-1zM92 668h1v2h-1zM96 668h1v2h-1zM110 668h1v2h-1zM114 668h1v2h-1zM136 668h1v2h-1zM150 668h1v2h-1zM91 670h1v2h-1zM115 670h1v2h-1zM90 672h1v1h-1zM116 672h1v1h-1zM55 670h1v5h-1zM71 670h1v5h-1zM91 673h1v2h-1zM95 670h1v5h-1zM111 670h1v5h-1zM115 673h1v2h-1zM135 670h1v5h-1zM151 670h1v5h-1zM56 675h1v2h-1zM70 675h1v2h-1zM92 675h1v2h-1zM96 675h1v2h-1zM110 675h1v2h-1zM114 675h1v2h-1zM136 675h1v2h-1zM150 675h1v2h-1zM57 677h1v1h-1zM69 677h1v1h-1zM97 677h1v1h-1zM109 677h1v1h-1zM137 677h1v1h-1zM149 677h1v1h-1zM58 678h1v1h-1zM68 678h1v1h-1zM93 677h1v2h-1zM98 678h1v1h-1zM108 678h1v1h-1zM113 677h1v2h-1zM138 678h1v1h-1zM148 678h1v1h-1zM59 679h2v1h-2zM66 679h2v1h-2zM99 679h2v1h-2zM106 679h2v1h-2zM139 679h2v1h-2zM146 679h2v1h-2zM158 97h2v583h-2zM61 680h5v1h-5zM94 679h1v2h-1zM101 680h5v1h-5zM112 679h1v2h-1zM141 680h5v1h-5zM157 680h3v1h-3zM47 93h2v590h-2zM95 681h1v2h-1zM111 681h1v2h-1zM156 681h3v2h-3zM47 683h3v1h-3zM96 683h15v1h-15zM155 683h3v1h-3zM48 684h3v1h-3zM154 684h3v1h-3zM49 685h3v1h-3zM153 685h3v1h-3zM51 686h5v1h-5zM150 686h5v1h-5zM52 687h102v1h-102zM55 688h96v1h-96z"/><path fill="#ffff00" d="M730 120h1v1h-1zM632 121h3v1h-3zM729 121h1v1h-1zM631 122h1v1h-1zM635 122h1v1h-1zM728 122h1v1h-1zM727 123h1v1h-1zM726 124h1v1h-1zM630 123h1v3h-1zM636 123h1v3h-1zM725 125h1v1h-1zM631 126h1v1h-1zM635 126h1v1h-1zM697 126h3v1h-3zM632 127h3v1h-3zM696 127h1v1h-1zM700 127h1v1h-1zM695 128h1v3h-1zM701 128h1v3h-1zM632 131h3v1h-3zM696 131h1v1h-1zM700 131h1v1h-1zM631 132h1v1h-1zM635 132h1v1h-1zM697 132h3v1h-3zM630 133h1v3h-1zM636 133h1v3h-1zM631 136h1v1h-1zM635 136h1v1h-1zM632 137h3v1h-3zM670 139h3v1h-3zM724 139h3v1h-3zM669 140h1v1h-1zM673 140h1v1h-1zM723 140h1v1h-1zM727 140h1v1h-1zM632 141h3v1h-3zM631 142h1v1h-1zM635 142h1v1h-1zM668 141h1v3h-1zM674 141h1v3h-1zM722 141h1v3h-1zM728 141h1v3h-1zM669 144h1v1h-1zM673 144h1v1h-1zM723 144h1v1h-1zM727 144h1v1h-1zM630 143h1v3h-1zM636 143h1v3h-1zM670 145h3v1h-3zM724 145h3v1h-3zM631 146h1v1h-1zM635 146h1v1h-1zM632 147h3v1h-3zM632 151h3v1h-3zM631 152h1v1h-1zM635 152h1v1h-1zM630 153h1v3h-1zM636 153h1v3h-1zM631 156h1v1h-1zM635 156h1v1h-1zM632 157h3v1h-3zM632 161h3v1h-3zM697 161h3v1h-3zM631 162h1v1h-1zM635 162h1v1h-1zM696 162h1v1h-1zM700 162h1v1h-1zM72 163h3v1h-3zM92 163h3v1h-3zM112 163h3v1h-3zM132 163h3v1h-3zM71 164h1v1h-1zM75 164h1v1h-1zM91 164h1v1h-1zM95 164h1v1h-1zM111 164h1v1h-1zM115 164h1v1h-1zM131 164h1v1h-1zM135 164h1v1h-1zM630 163h1v3h-1zM636 163h1v3h-1zM695 163h1v3h-1zM701 163h1v3h-1zM631 166h1v1h-1zM635 166h1v1h-1zM696 166h1v1h-1zM700 166h1v1h-1zM70 165h1v3h-1zM76 165h1v3h-1zM90 165h1v3h-1zM96 165h1v3h-1zM110 165h1v3h-1zM116 165h1v3h-1zM130 165h1v3h-1zM136 165h1v3h-1zM632 167h3v1h-3zM697 167h3v1h-3zM71 168h1v1h-1zM75 168h1v1h-1zM91 168h1v1h-1zM95 168h1v1h-1zM111 168h1v1h-1zM115 168h1v1h-1zM131 168h1v1h-1zM135 168h1v1h-1zM72 169h3v1h-3zM92 169h3v1h-3zM112 169h3v1h-3zM132 169h3v1h-3zM663 169h3v1h-3zM731 169h3v1h-3zM662 170h1v1h-1zM666 170h1v1h-1zM730 170h1v1h-1zM734 170h1v1h-1zM632 171h3v1h-3zM631 172h1v1h-1zM635 172h1v1h-1zM661 171h1v3h-1zM667 171h1v3h-1zM729 171h1v3h-1zM735 171h1v3h-1zM662 174h1v1h-1zM666 174h1v1h-1zM730 174h1v1h-1zM734 174h1v1h-1zM630 173h1v3h-1zM636 173h1v3h-1zM663 175h3v1h-3zM731 175h3v1h-3zM631 176h1v1h-1zM635 176h1v1h-1zM632 177h3v1h-3zM632 181h3v1h-3zM631 182h1v1h-1zM635 182h1v1h-1zM630 183h1v3h-1zM636 183h1v3h-1zM631 186h1v1h-1zM635 186h1v1h-1zM632 187h3v1h-3zM632 191h3v1h-3zM631 192h1v1h-1zM635 192h1v1h-1zM682 193h3v1h-3zM712 193h3v1h-3zM681 194h1v1h-1zM685 194h1v1h-1zM711 194h1v1h-1zM715 194h1v1h-1zM630 193h1v3h-1zM636 193h1v3h-1zM631 196h1v1h-1zM635 196h1v1h-1zM632 197h3v1h-3zM680 195h1v3h-1zM686 195h1v3h-1zM710 195h1v3h-1zM716 195h1v3h-1zM681 198h1v1h-1zM685 198h1v1h-1zM711 198h1v1h-1zM715 198h1v1h-1zM682 199h3v1h-3zM712 199h3v1h-3zM632 201h3v1h-3zM631 202h1v1h-1zM635 202h1v1h-1zM62 203h3v1h-3zM82 203h3v1h-3zM102 203h3v1h-3zM122 203h3v1h-3zM142 203h3v1h-3zM61 204h1v1h-1zM65 204h1v1h-1zM81 204h1v1h-1zM85 204h1v1h-1zM101 204h1v1h-1zM105 204h1v1h-1zM121 204h1v1h-1zM125 204h1v1h-1zM141 204h1v1h-1zM145 204h1v1h-1zM630 203h1v3h-1zM636 203h1v3h-1zM631 206h1v1h-1zM635 206h1v1h-1zM60 205h1v3h-1zM66 205h1v3h-1zM80 205h1v3h-1zM86 205h1v3h-1zM100 205h1v3h-1zM106 205h1v3h-1zM120 205h1v3h-1zM126 205h1v3h-1zM140 205h1v3h-1zM146 205h1v3h-1zM632 207h3v1h-3zM61 208h1v1h-1zM65 208h1v1h-1zM81 208h1v1h-1zM85 208h1v1h-1zM101 208h1v1h-1zM105 208h1v1h-1zM121 208h1v1h-1zM125 208h1v1h-1zM141 208h1v1h-1zM145 208h1v1h-1zM62 209h3v1h-3zM82 209h3v1h-3zM102 209h3v1h-3zM122 209h3v1h-3zM142 209h3v1h-3zM72 235h3v1h-3zM92 235h3v1h-3zM112 235h3v1h-3zM132 235h3v1h-3zM71 236h1v1h-1zM75 236h1v1h-1zM91 236h1v1h-1zM95 236h1v1h-1zM111 236h1v1h-1zM115 236h1v1h-1zM131 236h1v1h-1zM135 236h1v1h-1zM70 237h1v3h-1zM76 237h1v3h-1zM90 237h1v3h-1zM96 237h1v3h-1zM110 237h1v3h-1zM116 237h1v3h-1zM130 237h1v3h-1zM136 237h1v3h-1zM71 240h1v1h-1zM75 240h1v1h-1zM91 240h1v1h-1zM95 240h1v1h-1zM111 240h1v1h-1zM115 240h1v1h-1zM131 240h1v1h-1zM135 240h1v1h-1zM72 241h3v1h-3zM92 241h3v1h-3zM112 241h3v1h-3zM132 241h3v1h-3zM687 269h5v5h-5zM707 269h5v5h-5zM62 275h3v1h-3zM82 275h3v1h-3zM102 275h3v1h-3zM122 275h3v1h-3zM142 275h3v1h-3zM61 276h1v1h-1zM65 276h1v1h-1zM81 276h1v1h-1zM85 276h1v1h-1zM101 276h1v1h-1zM105 276h1v1h-1zM121 276h1v1h-1zM125 276h1v1h-1zM141 276h1v1h-1zM145 276h1v1h-1zM60 277h1v3h-1zM66 277h1v3h-1zM80 277h1v3h-1zM86 277h1v3h-1zM100 277h1v3h-1zM106 277h1v3h-1zM120 277h1v3h-1zM126 277h1v3h-1zM140 277h1v3h-1zM146 277h1v3h-1zM61 280h1v1h-1zM65 280h1v1h-1zM81 280h1v1h-1zM85 280h1v1h-1zM101 280h1v1h-1zM105 280h1v1h-1zM121 280h1v1h-1zM125 280h1v1h-1zM141 280h1v1h-1zM145 280h1v1h-1zM62 281h3v1h-3zM82 281h3v1h-3zM102 281h3v1h-3zM122 281h3v1h-3zM142 281h3v1h-3zM687 285h5v5h-5zM707 285h5v5h-5zM687 301h5v5h-5zM707 301h5v5h-5zM72 307h3v1h-3zM92 307h3v1h-3zM112 307h3v1h-3zM132 307h3v1h-3zM71 308h1v1h-1zM75 308h1v1h-1zM91 308h1v1h-1zM95 308h1v1h-1zM111 308h1v1h-1zM115 308h1v1h-1zM131 308h1v1h-1zM135 308h1v1h-1zM70 309h1v3h-1zM76 309h1v3h-1zM90 309h1v3h-1zM96 309h1v3h-1zM110 309h1v3h-1zM116 309h1v3h-1zM130 309h1v3h-1zM136 309h1v3h-1zM71 312h1v1h-1zM75 312h1v1h-1zM91 312h1v1h-1zM95 312h1v1h-1zM111 312h1v1h-1zM115 312h1v1h-1zM131 312h1v1h-1zM135 312h1v1h-1zM72 313h3v1h-3zM92 313h3v1h-3zM112 313h3v1h-3zM132 313h3v1h-3zM687 317h5v5h-5zM707 317h5v5h-5zM687 333h5v5h-5zM707 333h5v5h-5zM62 339h3v1h-3zM82 339h3v1h-3zM122 339h3v1h-3zM142 339h3v1h-3zM61 340h1v1h-1zM65 340h1v1h-1zM81 340h1v1h-1zM85 340h1v1h-1zM121 340h1v1h-1zM125 340h1v1h-1zM141 340h1v1h-1zM145 340h1v1h-1zM60 341h1v3h-1zM66 341h1v3h-1zM80 341h1v3h-1zM86 341h1v3h-1zM120 341h1v3h-1zM126 341h1v3h-1zM140 341h1v3h-1zM146 341h1v3h-1zM61 344h1v1h-1zM65 344h1v1h-1zM81 344h1v1h-1zM85 344h1v1h-1zM121 344h1v1h-1zM125 344h1v1h-1zM141 344h1v1h-1zM145 344h1v1h-1zM62 345h3v1h-3zM82 345h3v1h-3zM122 345h3v1h-3zM142 345h3v1h-3zM687 349h5v5h-5zM707 349h5v5h-5zM72 355h3v1h-3zM132 355h3v1h-3zM71 356h1v1h-1zM75 356h1v1h-1zM131 356h1v1h-1zM135 356h1v1h-1zM70 357h1v3h-1zM76 357h1v3h-1zM130 357h1v3h-1zM136 357h1v3h-1zM71 360h1v1h-1zM75 360h1v1h-1zM131 360h1v1h-1zM135 360h1v1h-1zM72 361h3v1h-3zM132 361h3v1h-3zM687 365h5v5h-5zM707 365h5v5h-5zM687 381h5v5h-5zM707 381h5v5h-5zM687 397h5v5h-5zM707 397h5v5h-5zM687 413h5v5h-5zM707 413h5v5h-5zM72 423h3v1h-3zM132 423h3v1h-3zM71 424h1v1h-1zM75 424h1v1h-1zM131 424h1v1h-1zM135 424h1v1h-1zM70 425h1v3h-1zM76 425h1v3h-1zM130 425h1v3h-1zM136 425h1v3h-1zM71 428h1v1h-1zM75 428h1v1h-1zM131 428h1v1h-1zM135 428h1v1h-1zM72 429h3v1h-3zM132 429h3v1h-3zM62 455h3v1h-3zM82 455h3v1h-3zM122 455h3v1h-3zM142 455h3v1h-3zM61 456h1v1h-1zM65 456h1v1h-1zM81 456h1v1h-1zM85 456h1v1h-1zM121 456h1v1h-1zM125 456h1v1h-1zM141 456h1v1h-1zM145 456h1v1h-1zM60 457h1v3h-1zM66 457h1v3h-1zM80 457h1v3h-1zM86 457h1v3h-1zM120 457h1v3h-1zM126 457h1v3h-1zM140 457h1v3h-1zM146 457h1v3h-1zM61 460h1v1h-1zM65 460h1v1h-1zM81 460h1v1h-1zM85 460h1v1h-1zM121 460h1v1h-1zM125 460h1v1h-1zM141 460h1v1h-1zM145 460h1v1h-1zM62 461h3v1h-3zM82 461h3v1h-3zM122 461h3v1h-3zM142 461h3v1h-3zM72 487h3v1h-3zM92 487h3v1h-3zM112 487h3v1h-3zM132 487h3v1h-3zM71 488h1v1h-1zM75 488h1v1h-1zM91 488h1v1h-1zM95 488h1v1h-1zM111 488h1v1h-1zM115 488h1v1h-1zM131 488h1v1h-1zM135 488h1v1h-1zM70 489h1v3h-1zM76 489h1v3h-1zM90 489h1v3h-1zM96 489h1v3h-1zM110 489h1v3h-1zM116 489h1v3h-1zM130 489h1v3h-1zM136 489h1v3h-1zM71 492h1v1h-1zM75 492h1v1h-1zM91 492h1v1h-1zM95 492h1v1h-1zM111 492h1v1h-1zM115 492h1v1h-1zM131 492h1v1h-1zM135 492h1v1h-1zM72 493h3v1h-3zM92 493h3v1h-3zM112 493h3v1h-3zM132 493h3v1h-3zM713 496h5v5h-5zM733 496h5v5h-5zM713 512h5v5h-5zM733 512h5v5h-5zM62 527h3v1h-3zM82 527h3v1h-3zM102 527h3v1h-3zM122 527h3v1h-3zM142 527h3v1h-3zM61 528h1v1h-1zM65 528h1v1h-1zM81 528h1v1h-1zM85 528h1v1h-1zM101 528h1v1h-1zM105 528h1v1h-1zM121 528h1v1h-1zM125 528h1v1h-1zM141 528h1v1h-1zM145 528h1v1h-1zM60 529h1v3h-1zM66 529h1v3h-1zM80 529h1v3h-1zM86 529h1v3h-1zM100 529h1v3h-1zM106 529h1v3h-1zM120 529h1v3h-1zM126 529h1v3h-1zM140 529h1v3h-1zM146 529h1v3h-1zM61 532h1v1h-1zM65 532h1v1h-1zM81 532h1v1h-1zM85 532h1v1h-1zM101 532h1v1h-1zM105 532h1v1h-1zM121 532h1v1h-1zM125 532h1v1h-1zM141 532h1v1h-1zM145 532h1v1h-1zM713 528h5v5h-5zM733 528h5v5h-5zM62 533h3v1h-3zM82 533h3v1h-3zM102 533h3v1h-3zM122 533h3v1h-3zM142 533h3v1h-3zM713 544h5v5h-5zM733 544h5v5h-5zM72 559h3v1h-3zM92 559h3v1h-3zM112 559h3v1h-3zM132 559h3v1h-3zM71 560h1v1h-1zM75 560h1v1h-1zM91 560h1v1h-1zM95 560h1v1h-1zM111 560h1v1h-1zM115 560h1v1h-1zM131 560h1v1h-1zM135 560h1v1h-1zM70 561h1v3h-1zM76 561h1v3h-1zM90 561h1v3h-1zM96 561h1v3h-1zM110 561h1v3h-1zM116 561h1v3h-1zM130 561h1v3h-1zM136 561h1v3h-1zM71 564h1v1h-1zM75 564h1v1h-1zM91 564h1v1h-1zM95 564h1v1h-1zM111 564h1v1h-1zM115 564h1v1h-1zM131 564h1v1h-1zM135 564h1v1h-1zM713 560h5v5h-5zM733 560h5v5h-5zM72 565h3v1h-3zM92 565h3v1h-3zM112 565h3v1h-3zM132 565h3v1h-3zM62 599h3v1h-3zM82 599h3v1h-3zM102 599h3v1h-3zM122 599h3v1h-3zM142 599h3v1h-3zM61 600h1v1h-1zM65 600h1v1h-1zM81 600h1v1h-1zM85 600h1v1h-1zM101 600h1v1h-1zM105 600h1v1h-1zM121 600h1v1h-1zM125 600h1v1h-1zM141 600h1v1h-1zM145 600h1v1h-1zM60 601h1v3h-1zM66 601h1v3h-1zM80 601h1v3h-1zM86 601h1v3h-1zM100 601h1v3h-1zM106 601h1v3h-1zM120 601h1v3h-1zM126 601h1v3h-1zM140 601h1v3h-1zM146 601h1v3h-1zM61 604h1v1h-1zM65 604h1v1h-1zM81 604h1v1h-1zM85 604h1v1h-1zM101 604h1v1h-1zM105 604h1v1h-1zM121 604h1v1h-1zM125 604h1v1h-1zM141 604h1v1h-1zM145 604h1v1h-1zM62 605h3v1h-3zM82 605h3v1h-3zM102 605h3v1h-3zM122 605h3v1h-3zM142 605h3v1h-3zM72 631h3v1h-3zM92 631h3v1h-3zM112 631h3v1h-3zM132 631h3v1h-3zM71 632h1v1h-1zM75 632h1v1h-1zM91 632h1v1h-1zM95 632h1v1h-1zM111 632h1v1h-1zM115 632h1v1h-1zM131 632h1v1h-1zM135 632h1v1h-1zM70 633h1v3h-1zM76 633h1v3h-1zM90 633h1v3h-1zM96 633h1v3h-1zM110 633h1v3h-1zM116 633h1v3h-1zM130 633h1v3h-1zM136 633h1v3h-1zM71 636h1v1h-1zM75 636h1v1h-1zM91 636h1v1h-1zM95 636h1v1h-1zM111 636h1v1h-1zM115 636h1v1h-1zM131 636h1v1h-1zM135 636h1v1h-1zM72 637h3v1h-3zM92 637h3v1h-3zM112 637h3v1h-3zM132 637h3v1h-3z"/>
<path d="M677 418 V272 Q677 266 683 264.5 L708 258 L715 258 Q718.5 258 721 263 V423 L715 432 L707 432 L684 425.5 Q677 423.5 677 418 Z" fill="none" stroke="#fff" stroke-width="2"/>
<path d="M673.5 418.5 V271 Q673.5 262.5 680.5 262 L707 253.5 L713 253.5 Q719 253.5 723 261.5 L725.5 267 V422.5 L719.5 432 Q717 435.5 712.5 436.5 L706.5 436.5 L684 428.5 Q675 425 673.5 418.5 Z" fill="none" stroke="#fff" stroke-width="1"/>
</svg>
<svg class="abs" style="left:0;top:0" width="788" height="713" viewBox="0 0 788 713">
<path fill-rule="evenodd" fill="#fffff4" stroke="#6a6a55" stroke-width="0.7" d="M707 645 H720.5 A13.2 13.2 0 1 1 720.5 656 H707 Z M740 650.5 A7.5 7.5 0 1 0 725 650.5 A7.5 7.5 0 1 0 740 650.5 Z"/>
<rect x="711" y="648" width="5" height="5" fill="#ffff00" shape-rendering="crispEdges"/>
<rect x="707" y="651" width="4" height="1" fill="#b0b0ff" shape-rendering="crispEdges"/>
</svg>
<div class="wid" style="left:17px;top:354px"></div><svg class="abs" style="left:17px;top:354px" width="18" height="53" viewBox="0 0 18 53">
<path d="M11.8 2.2 L8.8 5" stroke="#8e8e8e" stroke-width="1.4" fill="none"/>
<rect x="7" y="5" width="4" height="10" fill="#7c7c7c"/>
<rect x="7" y="8" width="4" height="1" fill="#9a9a9a"/><rect x="7" y="11" width="4" height="1" fill="#5e5e5e"/>
<rect x="3" y="9" width="2" height="7" fill="#a6a6a6"/><rect x="13" y="9" width="2" height="7" fill="#a6a6a6"/>
<rect x="3" y="15" width="12" height="11" fill="#a0a0a0"/><rect x="7" y="15" width="4" height="11" fill="#959595"/>
<rect x="6" y="26" width="6" height="2" fill="#0c0c0c"/>
<path d="M9 30.5 L13.6 35.5 L10 35.5 L10 39 L8 39 L8 35.5 L4.4 35.5 Z" fill="#ff0000"/>
<ellipse cx="9" cy="46.6" rx="6.1" ry="3.6" fill="#fff" stroke="#000" stroke-width="1.25"/>
<path d="M5.5 43.0 Q10.5 39.800000000000004 15.2 43.800000000000004" stroke="#000" stroke-width="1.3" fill="none"/>
<ellipse cx="9.4" cy="46.7" rx="3.2" ry="2.9" fill="#0a28f5"/>
<path d="M7.8 47.6 L9.6 46.0" stroke="#fff" stroke-width="0.9"/>
</svg>
<div class="wid" style="left:754px;top:126px"></div><svg class="abs" style="left:754px;top:126px" width="18" height="53" viewBox="0 0 18 53">
<path d="M11.8 2.2 L8.8 5" stroke="#8e8e8e" stroke-width="1.4" fill="none"/>
<rect x="7" y="5" width="4" height="10" fill="#7c7c7c"/>
<rect x="7" y="8" width="4" height="1" fill="#9a9a9a"/><rect x="7" y="11" width="4" height="1" fill="#5e5e5e"/>
<rect x="3" y="9" width="2" height="7" fill="#a6a6a6"/><rect x="13" y="9" width="2" height="7" fill="#a6a6a6"/>
<rect x="3" y="15" width="12" height="11" fill="#a0a0a0"/><rect x="7" y="15" width="4" height="11" fill="#959595"/>
<rect x="6" y="26" width="6" height="2" fill="#0c0c0c"/>
<path d="M9 30.5 L13.6 35.5 L10 35.5 L10 39 L8 39 L8 35.5 L4.4 35.5 Z" fill="#ff0000"/>
<ellipse cx="9" cy="46.6" rx="6.1" ry="3.6" fill="#fff" stroke="#000" stroke-width="1.25"/>
<path d="M5.5 43.0 Q10.5 39.800000000000004 15.2 43.800000000000004" stroke="#000" stroke-width="1.3" fill="none"/>
<ellipse cx="9.4" cy="46.7" rx="3.2" ry="2.9" fill="#0a28f5"/>
<path d="M7.8 47.6 L9.6 46.0" stroke="#fff" stroke-width="0.9"/>
</svg>
<div class="wid" style="left:754px;top:308px"></div><svg class="abs" style="left:754px;top:308px" width="18" height="53" viewBox="0 0 18 53">
<path d="M10.8 2.2 L9 5" stroke="#a0a0a0" stroke-width="1.3" fill="none"/>
<rect x="7" y="5" width="4" height="7" fill="#9a9a9a"/>
<rect x="3" y="8" width="2" height="12" fill="#b0b0b0"/><rect x="13" y="8" width="2" height="12" fill="#b0b0b0"/>
<rect x="3" y="11.5" width="12" height="9" fill="#a9a9a9"/><rect x="7" y="11" width="4" height="10" fill="#a0a0a0"/>
<ellipse cx="9" cy="28.6" rx="6.1" ry="3.6" fill="#fff" stroke="#000" stroke-width="1.25"/>
<path d="M5.5 25.0 Q10.5 21.8 15.2 25.8" stroke="#000" stroke-width="1.3" fill="none"/>
<ellipse cx="9.4" cy="28.700000000000003" rx="3.2" ry="2.9" fill="#0a28f5"/>
<path d="M7.8 29.6 L9.6 28.0" stroke="#fff" stroke-width="0.9"/>
<path d="M9 43.5 L13.6 38.6 L10 38.6 L10 35 L8 35 L8 38.6 L4.4 38.6 Z" fill="#ff0000"/>
<rect x="3" y="45" width="12" height="4" fill="#959595"/>
<rect x="6" y="49" width="6" height="2" fill="#0c0c0c"/>
</svg>
<div class="wid" style="left:754px;top:499px"></div><svg class="abs" style="left:754px;top:499px" width="18" height="53" viewBox="0 0 18 53">
<path d="M11.8 2.2 L8.8 5" stroke="#8e8e8e" stroke-width="1.4" fill="none"/>
<rect x="7" y="5" width="4" height="10" fill="#7c7c7c"/>
<rect x="7" y="8" width="4" height="1" fill="#9a9a9a"/><rect x="7" y="11" width="4" height="1" fill="#5e5e5e"/>
<rect x="3" y="9" width="2" height="7" fill="#a6a6a6"/><rect x="13" y="9" width="2" height="7" fill="#a6a6a6"/>
<rect x="3" y="15" width="12" height="11" fill="#a0a0a0"/><rect x="7" y="15" width="4" height="11" fill="#959595"/>
<rect x="6" y="26" width="6" height="2" fill="#0c0c0c"/>
<path d="M9 30.5 L13.6 35.5 L10 35.5 L10 39 L8 39 L8 35.5 L4.4 35.5 Z" fill="#ff0000"/>
<ellipse cx="9" cy="46.6" rx="6.1" ry="3.6" fill="#fff" stroke="#000" stroke-width="1.25"/>
<path d="M5.5 43.0 Q10.5 39.800000000000004 15.2 43.800000000000004" stroke="#000" stroke-width="1.3" fill="none"/>
<ellipse cx="9.4" cy="46.7" rx="3.2" ry="2.9" fill="#0a28f5"/>
<path d="M7.8 47.6 L9.6 46.0" stroke="#fff" stroke-width="0.9"/>
</svg>
<div class="wid" style="left:754px;top:615px"></div><svg class="abs" style="left:754px;top:615px" width="18" height="53" viewBox="0 0 18 53">
<path d="M10.8 2.2 L9 5" stroke="#a0a0a0" stroke-width="1.3" fill="none"/>
<rect x="7" y="5" width="4" height="7" fill="#9a9a9a"/>
<rect x="3" y="8" width="2" height="12" fill="#b0b0b0"/><rect x="13" y="8" width="2" height="12" fill="#b0b0b0"/>
<rect x="3" y="11.5" width="12" height="9" fill="#a9a9a9"/><rect x="7" y="11" width="4" height="10" fill="#a0a0a0"/>
<ellipse cx="9" cy="28.6" rx="6.1" ry="3.6" fill="#fff" stroke="#000" stroke-width="1.25"/>
<path d="M5.5 25.0 Q10.5 21.8 15.2 25.8" stroke="#000" stroke-width="1.3" fill="none"/>
<ellipse cx="9.4" cy="28.700000000000003" rx="3.2" ry="2.9" fill="#0a28f5"/>
<path d="M7.8 29.6 L9.6 28.0" stroke="#fff" stroke-width="0.9"/>
<path d="M9 43.5 L13.6 38.6 L10 38.6 L10 35 L8 35 L8 38.6 L4.4 38.6 Z" fill="#ff0000"/>
<rect x="3" y="45" width="12" height="4" fill="#959595"/>
<rect x="6" y="49" width="6" height="2" fill="#0c0c0c"/>
</svg>
</body></html>
